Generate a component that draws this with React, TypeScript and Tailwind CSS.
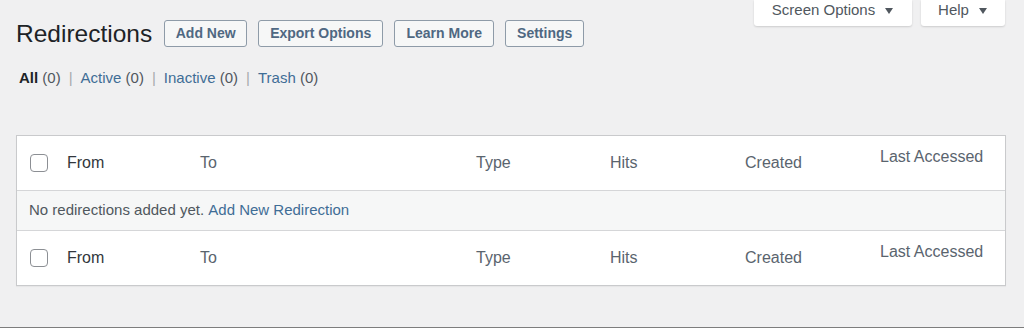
import React from 'react'

const font = { fontFamily: '"Liberation Sans", Arial, sans-serif' }

const columns = ['To', 'Type', 'Hits', 'Created']

function Caret() {
  return (
    <svg width="10" height="8" viewBox="0 0 10 8" className="ml-[9px] mt-[1px]">
      <path d="M1 1h8L5 7z" fill="#50575e" />
    </svg>
  )
}

function HeaderRow() {
  return (
    <div className="grid grid-cols-[50px_133px_276px_134px_135px_135px_1fr] items-center h-[54px] bg-white text-[16px]">
      <div className="pl-[13px] flex items-center">
        <span className="w-[18px] h-[18px] rounded-[4px] border border-[#8c8f94] bg-white" />
      </div>
      <div className="text-[#32373c]">From</div>
      {columns.map((c) => (
        <div key={c} className="text-[#5a646e]">{c}</div>
      ))}
      <div className="text-[#5a646e] pb-[12px]">Last Accessed</div>
    </div>
  )
}

export default function App() {
  return (
    <div
      className="relative w-[1024px] h-[328px] bg-[#f0f0f1] border-b border-[#7d7d7d] overflow-hidden"
      style={font}
    >
      {/* screen meta tabs */}
      <div className="absolute top-0 right-[19px] flex gap-[9px]">
        <div className="flex items-center h-[26px] w-[158px] justify-center pb-[5px] bg-white rounded-b-[3px] shadow-[0_1px_2px_rgba(0,0,0,0.15)] text-[15px] text-[#50575e]">
          Screen Options
          <Caret />
        </div>
        <div className="flex items-center h-[26px] w-[84px] justify-center pb-[5px] bg-white rounded-b-[3px] shadow-[0_1px_2px_rgba(0,0,0,0.15)] text-[15px] text-[#50575e]">
          Help
          <Caret />
        </div>
      </div>

      <div className="pl-[16px] pt-[20px] flex items-center">
        <h1 className="text-[24.5px] text-[#1d2327] leading-none mr-[12px] mt-[1px]">Redirections</h1>
        <div className="flex gap-[11px]">
          {[
            ['Add New', 'w-[83px]'],
            ['Export Options', 'w-[125px]'],
            ['Learn More', 'w-[100px]'],
            ['Settings', 'w-[79px]'],
          ].map(([label, w]) => (
            <button
              key={label}
              className={`${w} h-[27px] border border-[#8e9ba8] rounded-[3px] bg-[#f6f7f7] text-[14px] font-bold text-[#4f6882]`}
            >
              {label}
            </button>
          ))}
        </div>
      </div>

      <div className="pl-[19px] mt-[20px] text-[15px] text-[#50575e] flex items-center gap-[8px]">
        <span>
          <b className="text-[#1d2327]">All</b> (0)
        </span>
        <span className="text-[#a7aaad]">|</span>
        <span>
          <span className="text-[#3f6d96]">Active</span> (0)
        </span>
        <span className="text-[#a7aaad]">|</span>
        <span>
          <span className="text-[#3f6d96]">Inactive</span> (0)
        </span>
        <span className="text-[#a7aaad]">|</span>
        <span>
          <span className="text-[#3f6d96]">Trash</span> (0)
        </span>
      </div>

      <div className="ml-[16px] mr-[18px] mt-[45px] border border-[#c9cacc] shadow-[0_1px_1px_rgba(0,0,0,0.04)]">
        <HeaderRow />
        <div className="h-[41px] flex items-center pl-[12px] bg-[#f6f7f7] border-y border-[#d5d6d8] text-[15px] text-[#50575e]">
          No redirections added yet.&nbsp;<span className="text-[#3f6d96]">Add New Redirection</span>
        </div>
        <HeaderRow />
      </div>
    </div>
  )
}
